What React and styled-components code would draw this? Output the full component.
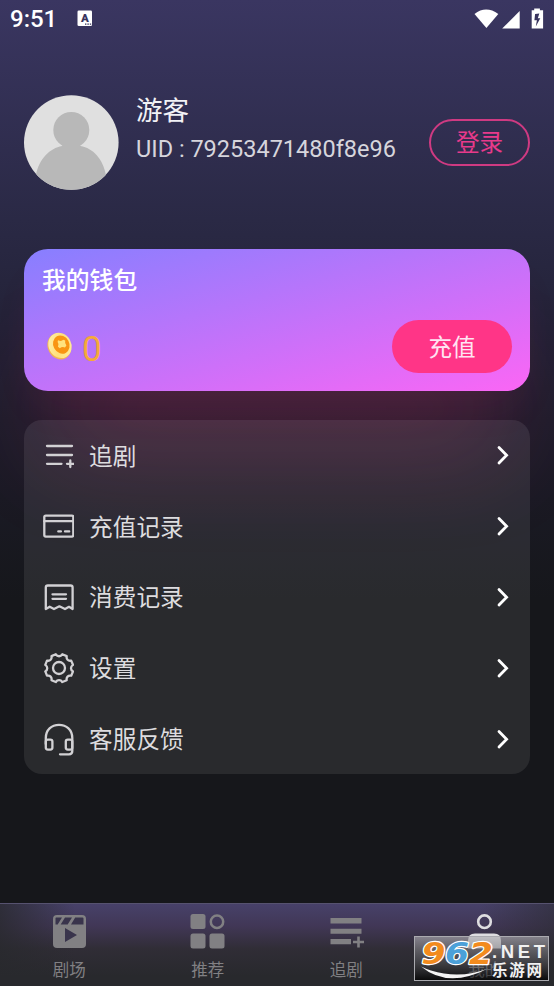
import React from "react";
import styled, { createGlobalStyle } from "styled-components";

const GlobalStyle = createGlobalStyle`
  body {
    margin: 0;
    background: #15161b;
    font-family: Roboto, "Noto Sans CJK SC", sans-serif;
  }

  * {
    box-sizing: border-box;
  }
`;

const Screen = styled.div`
  display: flex;
  flex-direction: column;
  position: relative;
  width: 554px;
  height: 986px;
  overflow: hidden;
  background: linear-gradient(
    180deg,
    #3a3661 0px,
    #2a2945 220px,
    #1d1c2b 420px,
    #16171b 600px
  );
`;

const StatusBar = styled.header`
  display: flex;
  align-items: center;
  height: 38px;
  padding: 0 9px 2px 10px;
  color: #ffffff;
`;

const Clock = styled.span`
  width: 67px;
  padding-top: 2px;
  font-size: 24px;
  font-weight: 500;
  line-height: 36px;
`;

const StatusIcons = styled.div`
  display: flex;
  margin-left: auto;
`;

const Profile = styled.section`
  display: flex;
  align-items: center;
  height: 95px;
  margin: 56.5px 24px 0;
`;

const ProfileInfo = styled.div`
  flex: 1;
  align-self: flex-start;
  margin-left: 17px;
  white-space: nowrap;
`;

const Nickname = styled.div`
  height: 32px;
  font-size: 26.5px;
  line-height: 31px;
  color: #f2f2f6;
`;

const Uid = styled.div`
  margin-top: 6px;
  font-size: 23.5px;
  line-height: 32px;
  color: #d6d5dc;
`;

const LoginButton = styled.button`
  width: 101px;
  height: 47px;
  padding: 0 0 2px;
  border: 2px solid #cf3a82;
  border-radius: 24px;
  background: none;
  font-family: inherit;
  font-size: 23.6px;
  color: #e83a8b;
`;

const Wallet = styled.section`
  display: flex;
  flex-direction: column;
  height: 141.5px;
  margin: 59.5px 24px 0;
  padding: 14px 18px 17px;
  border-radius: 24px;
  background: linear-gradient(to bottom right, #877fff, #fb66f5);
  box-shadow:
    0 24px 44px -14px rgba(255, 51, 120, 0.1),
    0 88px 100px -24px rgba(255, 51, 120, 0.2);
`;

const WalletTitle = styled.div`
  font-size: 23.8px;
  font-weight: 500;
  line-height: 36px;
  color: #ffffff;
`;

const WalletRow = styled.div`
  display: flex;
  align-items: center;
  margin-top: 21px;
`;

const Balance = styled.span`
  margin: 6px 0 0 4px;
  font-size: 35px;
  line-height: 40px;
  color: #f5a93a;
`;

const TopUpButton = styled.button`
  width: 120px;
  height: 53px;
  margin-left: auto;
  padding: 0 0 2px;
  border: none;
  border-radius: 27px;
  background: #ff3587;
  font-family: inherit;
  font-size: 23.6px;
  color: #ffe4f2;
`;

const Menu = styled.ul`
  margin: 29.5px 24px 0;
  padding: 0;
  border-radius: 18px;
  background: rgba(255, 255, 255, 0.082);
  list-style: none;
`;

const MenuItem = styled.li`
  display: flex;
  align-items: center;
  height: 70.8px;
  padding: 0 18px;
`;

const MenuLabel = styled.span`
  flex: 1;
  margin-left: 15px;
  padding-top: 3px;
  font-size: 23.7px;
  line-height: 36px;
  color: #dddcdf;
`;

const TabBar = styled.nav`
  display: flex;
  height: 83px;
  margin-top: auto;
  border-top: 1px solid #56526f;
  background:
    linear-gradient(90deg, #28292d -20px, transparent 75px, transparent 479px, #28292d 620px),
    linear-gradient(180deg, #474169 0, #413756 22px, #302d36 45px, #28292d 72px);
`;

const Tab = styled.div`
  display: flex;
  flex: 1;
  flex-direction: column;
  align-items: center;
  padding-top: 8px;
  color: ${(props) => (props.$active ? "#dedde0" : "#818083")};
`;

const TabLabel = styled.span`
  margin-top: 6px;
  font-size: 16.5px;
  line-height: 25px;
`;

const Badge = styled.div`
  position: absolute;
  right: 5px;
  bottom: 5px;
  width: 135px;
  height: 45px;
`;

const LineIcon = ({ children }) => (
  <svg
    width="32"
    height="34"
    viewBox="0 0 32 34"
    fill="none"
    stroke="#d2d1d4"
    strokeWidth="2.3"
    strokeLinecap="round"
    strokeLinejoin="round"
  >
    {children}
  </svg>
);

const menuItems = [
  {
    label: "追剧",
    icon: <path d="M5 8h25M5 17h25M5 25.8h14.5M25 25.8h6.5M28.3 22.5v6.6" />,
  },
  {
    label: "充值记录",
    icon: (
      <>
        <rect x="2.3" y="6.6" width="29" height="21" rx="1.5" />
        <path d="M2.3 12.2h29M16.3 22.4h2.6M23 22.4h4.2" />
      </>
    ),
  },
  {
    label: "消费记录",
    icon: (
      <path d="M3.8 29V7.5q0-2 2-2h22.8q2 0 2 2V29l-3.6-2.2-4 2.2-5.6-2.7-5.4 2.7-4.3-2.3zM10.5 14.3h13.5M10.5 18.8h13.5" />
    ),
  },
  {
    label: "设置",
    icon: (
      <>
        <path d="M13.8 3.3c1.7 2.6 4.8 2.6 6.5 0l4.4 1.8c-.6 3.1 1.4 5.2 4.5 4.5l1.8 4.3c-2.7 1.8-2.7 4.7 0 6.5l-1.8 4.3c-3.1-.6-5.1 1.4-4.5 4.5l-4.4 1.8c-1.7-2.6-4.8-2.6-6.5 0l-4.3-1.8c.6-3.1-1.4-5.1-4.5-4.5l-1.7-4.3c2.6-1.8 2.6-4.7 0-6.5l1.7-4.3c3.1.7 5.1-1.4 4.5-4.5z" />
        <circle cx="17" cy="17" r="6" />
      </>
    ),
  },
  {
    label: "客服反馈",
    icon: (
      <>
        <path d="M3.8 22v-6C3.8 8 9.5 2.8 17 2.8S30.3 8 30.3 16v13q0 3.3-3.3 3.3h-9" />
        <rect x="3.8" y="17.6" width="6.6" height="10" rx="2" />
        <rect x="23.8" y="17.6" width="6.5" height="10" rx="2" />
      </>
    ),
  },
];

const tabs = [
  {
    label: "剧场",
    icon: (
      <>
        <rect x="3" y="3" width="33" height="33" rx="4" fill="currentColor" />
        <path
          d="M6 5.5h6l-4.3 7H5.5V6zM15 5.5h7l-4.3 7h-7zM25.2 5.5h7.3q1 0 1 1v6H21zM15 16l12 7-12 7z"
          fill="#39344c"
        />
      </>
    ),
  },
  {
    label: "推荐",
    icon: (
      <>
        <g fill="currentColor">
          <rect x="2.5" y="2" width="15" height="15" rx="2.5" />
          <rect x="2.5" y="21.5" width="15" height="15" rx="2.5" />
          <rect x="21.5" y="21.5" width="15" height="15" rx="2.5" />
        </g>
        <circle cx="29" cy="9.7" r="6.2" fill="none" stroke="currentColor" strokeWidth="2.5" />
      </>
    ),
  },
  {
    label: "追剧",
    icon: (
      <path
        d="M3.5 6h31v5.5h-31zM3.5 16.7h31v5h-31zM3.5 27h20.5v5.2H3.5zM26 28.7h4.2v-4.2h2.6v4.2h4.2v2.6h-4.2v4.2h-2.6v-4.2h-4.2z"
        fill="currentColor"
      />
    ),
  },
  {
    label: "我的",
    active: true,
    icon: (
      <>
        <circle cx="19.5" cy="9.7" r="6.3" fill="none" stroke="currentColor" strokeWidth="2.6" />
        <path d="M3 36.5v-8q0-7 7-7h19q7 0 7 7v8z" fill="currentColor" />
      </>
    ),
  },
];

const Avatar = () => (
  <svg width="95" height="95" viewBox="0 0 95 95">
    <clipPath id="avatar">
      <circle cx="47.3" cy="47.5" r="47.3" />
    </clipPath>
    <g clipPath="url(#avatar)">
      <rect width="95" height="95" fill="#e0e0e0" />
      <circle cx="47.3" cy="35" r="18" fill="#b8b8b8" />
      <path
        d="M12 95V80C15 64 26 53 38 51l2-4h14.5l2 4C69 53 79 64 82 80v15z"
        fill="#b8b8b8"
      />
    </g>
  </svg>
);

const Coin = () => (
  <svg width="36" height="38" viewBox="0 0 36 38">
    <defs>
      <linearGradient id="coin" x1="0" y1="0" x2="1" y2="1">
        <stop offset="0" stopColor="#fff3b5" />
        <stop offset="0.5" stopColor="#ffe07a" />
        <stop offset="1" stopColor="#fff0a3" />
      </linearGradient>
    </defs>
    <ellipse cx="17.3" cy="18.4" rx="11.5" ry="13.4" transform="rotate(-28 17.3 18.4)" fill="#f2b653" />
    <ellipse cx="18" cy="17.4" rx="11.3" ry="13" transform="rotate(-28 18 17.4)" fill="url(#coin)" />
    <ellipse cx="19.3" cy="16.6" rx="8" ry="9.4" transform="rotate(-28 19.3 16.6)" fill="#f99512" />
    <path d="M16 12.2q3.5 1.6 5.2-.4l2 .8q-.6 2.6 1.2 5l-1.4 1.8q-3-1-5.2.8l-1.8-1.4q1.2-3-.4-4.8z" fill="#ffe27d" />
  </svg>
);

const KeyboardIcon = () => (
  <svg width="16" height="17" viewBox="0 0 16 17">
    <rect x="0.5" y="0.5" width="14.5" height="15.5" rx="1.3" fill="#fff" />
    <text x="7.8" y="11.8" textAnchor="middle" fontSize="11.5" fontWeight="900" fill="#38345d">
      A
    </text>
    <path d="M8 13.5h1.4v1.2H8zM10.4 13.5h1.4v1.2h-1.4zM12.8 13.5h1.4v1.2h-1.4z" fill="#38345d" />
  </svg>
);

const SystemIcons = () => (
  <svg width="72" height="24" viewBox="0 0 72 24" fill="#fff">
    <path d="M1.5 8Q13 -.8 25.3 8L13.4 22z" />
    <path d="M46.7 5v17.6h-17.5z" />
    <path d="M58.7 4.3h2.5V2.5h5.7v1.8h3.2v18.3h-11.4z" />
    <path d="M66.3 7.5l-4.2.4-.7 6.3h2.5l-1.1 6.3 4.5-8.3h-2.5z" fill="#38345e" />
  </svg>
);

const Arrow = () => (
  <svg width="18" height="24" viewBox="0 0 18 24" fill="none" stroke="#fff" strokeWidth="2.8">
    <path d="M5 4.4l7.6 7.8L5 20" strokeLinecap="round" />
  </svg>
);

const SiteBadge = () => (
  <Badge>
    <svg width="135" height="45" viewBox="0 0 135 45">
      <defs>
        <linearGradient id="plate" x1="0" y1="0" x2="0" y2="1">
          <stop offset="0" stopColor="#b0afb4" stopOpacity="0.65" />
          <stop offset="0.45" stopColor="#66666b" stopOpacity="0.6" />
          <stop offset="1" stopColor="#000000" stopOpacity="0.8" />
        </linearGradient>
      </defs>
      <rect x="0.5" y="0.5" width="134" height="44" fill="url(#plate)" stroke="#aaaaaf" />
      <path d="M7 30.5Q34 53 74 32.5q-28 11-57 2-6-2-10-4z" fill="#f4f4f4" />
      <g
        fontFamily="DejaVu Sans, sans-serif"
        fontSize="31"
        fontWeight="700"
        fontStyle="italic"
        stroke="#fff"
        strokeWidth="2.4"
        paintOrder="stroke"
        strokeLinejoin="round"
      >
        <text x="7.5" y="27.5" textLength="24" lengthAdjust="spacingAndGlyphs" fill="#f28b1e">9</text>
        <text x="31" y="27.5" textLength="24" lengthAdjust="spacingAndGlyphs" fill="#4ba0d8">6</text>
        <text x="55" y="27.5" textLength="24" lengthAdjust="spacingAndGlyphs" fill="#f28b1e">2</text>
      </g>
      <g fill="#f1f1f1" fontWeight="700">
        <text x="78" y="22" fontFamily="Liberation Sans, sans-serif" fontSize="18.5" textLength="53">
          .NET
        </text>
        <text x="78" y="39.5" fontSize="15.5" textLength="50">
          乐游网
        </text>
      </g>
    </svg>
  </Badge>
);

export default () => {
  return (
    <Screen>
      <GlobalStyle />
      <StatusBar>
        <Clock>9:51</Clock>
        <KeyboardIcon />
        <StatusIcons>
          <SystemIcons />
        </StatusIcons>
      </StatusBar>
      <Profile>
        <Avatar />
        <ProfileInfo>
          <Nickname>游客</Nickname>
          <Uid>UID : 79253471480f8e96</Uid>
        </ProfileInfo>
        <LoginButton>登录</LoginButton>
      </Profile>
      <Wallet>
        <WalletTitle>我的钱包</WalletTitle>
        <WalletRow>
          <Coin />
          <Balance>0</Balance>
          <TopUpButton>充值</TopUpButton>
        </WalletRow>
      </Wallet>
      <Menu>
        {menuItems.map((item) => (
          <MenuItem key={item.label}>
            <LineIcon>{item.icon}</LineIcon>
            <MenuLabel>{item.label}</MenuLabel>
            <Arrow />
          </MenuItem>
        ))}
      </Menu>
      <TabBar>
        {tabs.map((tab) => (
          <Tab key={tab.label} $active={tab.active}>
            <svg width="39" height="40" viewBox="0 0 39 40">
              {tab.icon}
            </svg>
            <TabLabel>{tab.label}</TabLabel>
          </Tab>
        ))}
      </TabBar>
      <SiteBadge />
    </Screen>
  );
};
